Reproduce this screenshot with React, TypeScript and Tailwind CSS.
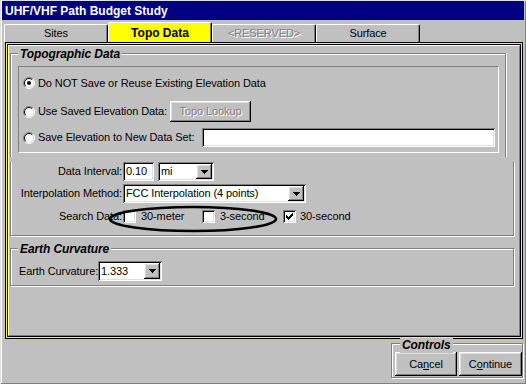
import React from "react";

// win95 bevels
const raised =
  "shadow-[inset_-1px_-1px_0_#000,inset_1px_1px_0_#fff,inset_-2px_-2px_0_#808080,inset_2px_2px_0_#dfdfdf]";
const sunken =
  "shadow-[inset_1px_1px_0_#808080,inset_-1px_-1px_0_#fff,inset_2px_2px_0_#000,inset_-2px_-2px_0_#dfdfdf]";
const greyed = "text-[#808080] [text-shadow:1px_1px_0_#fff]";
const legend = "absolute bg-[#c0c0c0] px-[2px] text-[12px] leading-[15px] font-bold italic whitespace-nowrap";

function Radio({ checked = false }: { checked?: boolean }) {
  return (
    <svg width="12" height="12" viewBox="0 0 12 12" className="shrink-0">
      <circle cx="6" cy="6" r="5" fill="#fff" />
      <path d="M9.9 2.1A5.5 5.5 0 0 0 2.1 9.9" stroke="#808080" fill="none" />
      <path d="M2.1 9.9A5.5 5.5 0 0 0 9.9 2.1" stroke="#fff" fill="none" />
      <path d="M9.2 2.8A4.5 4.5 0 0 0 2.8 9.2" stroke="#000" fill="none" />
      <path d="M2.8 9.2A4.5 4.5 0 0 0 9.2 2.8" stroke="#dfdfdf" fill="none" />
      {checked && <circle cx="6" cy="6" r="2" fill="#000" />}
    </svg>
  );
}

function Check({ checked = false }: { checked?: boolean }) {
  return (
    <span className={`w-[13px] h-[13px] shrink-0 bg-white ${sunken} flex items-center justify-center`}>
      {checked && (
        <svg width="7" height="7" viewBox="0 0 7 7" shapeRendering="crispEdges">
          <rect x="6" y="0" width="1" height="1" />
          <rect x="5" y="1" width="2" height="1" />
          <rect x="0" y="2" width="1" height="1" />
          <rect x="4" y="2" width="3" height="1" />
          <rect x="0" y="3" width="2" height="1" />
          <rect x="3" y="3" width="3" height="1" />
          <rect x="0" y="4" width="5" height="1" />
          <rect x="1" y="5" width="3" height="1" />
          <rect x="2" y="6" width="1" height="1" />
        </svg>
      )}
    </span>
  );
}

function Combo({ value, className }: { value: string; className: string }) {
  return (
    <div className={`flex bg-white p-[2px] ${sunken} ${className}`}>
      <span className="flex-1 pl-[1px] flex items-center truncate">{value}</span>
      <span className={`w-[16px] bg-[#c0c0c0] ${raised} flex items-center justify-center`}>
        <svg width="7" height="4" viewBox="0 0 7 4" shapeRendering="crispEdges">
          <rect x="0" y="0" width="7" height="1" />
          <rect x="1" y="1" width="5" height="1" />
          <rect x="2" y="2" width="3" height="1" />
          <rect x="3" y="3" width="1" height="1" />
        </svg>
      </span>
    </div>
  );
}

const tabs = [
  { label: "Sites" },
  { label: "Topo Data", active: true },
  { label: "<RESERVED>", disabled: true },
  { label: "Surface" },
];

export default function App() {
  return (
    <div className="relative w-[526px] h-[384px] overflow-hidden bg-[#c0c0c0] pt-[1px] px-[2px] font-['Liberation_Sans',Arial,sans-serif] text-[11px] text-black tracking-[-0.1px] whitespace-nowrap shadow-[inset_1px_1px_0_#dfdfdf,inset_-1px_-1px_0_#808080,inset_2px_2px_0_#fff]">
      {/* title bar */}
      <div className="h-[19px] bg-[#000080] text-white font-bold text-[12px] tracking-normal flex items-center pl-[3px]">
        UHF/VHF Path Budget Study
      </div>

      {/* tabs */}
      <div className="mt-[2px] h-[20px] pl-[2px] flex items-end">
        {tabs.map((t) => (
          <div
            key={t.label}
            className={`w-[104px] flex items-center justify-center rounded-t-[2px] border-t border-l border-white border-r border-r-black shadow-[inset_-1px_0_0_#808080] ${
              t.active ? "h-[20px] bg-[#ffff00] font-bold text-[12px] tracking-normal" : "h-[18px]"
            } ${t.disabled ? greyed : ""}`}
          >
            {t.label}
          </div>
        ))}
      </div>

      {/* tab page */}
      <div className="ml-[3px] w-[518px] h-[297px] border border-black">
        <div className="h-full border border-[#ffff00]">
          <div className="h-full border border-black">
            <div className="h-full border-t border-l border-white border-r border-b border-r-[#808080] border-b-[#808080]">
              <div className="ml-[1px] mt-[7px] w-[505px]">
                {/* Topographic Data */}
                <div className="relative w-[496px] h-[104px] border-t border-l border-r border-[#808080] shadow-[inset_1px_1px_0_#fff,1px_0_0_#fff]">
                  <span className={`${legend} left-[7px] top-[-7px]`}>Topographic Data</span>
                  <div className="ml-[7px] mt-[12px] w-[481px] h-[87px] border-t border-l border-[#808080] border-r border-b border-r-white border-b-white pl-[4px] pt-[9px]">
                    <div className="h-[14px] flex items-center">
                      <Radio checked />
                      <span className="ml-[3px]">Do NOT Save or Reuse Existing Elevation Data</span>
                    </div>
                    <div className="mt-[11px] h-[21px] flex items-center">
                      <div className="w-[147px] flex items-center">
                        <Radio />
                        <span className="ml-[3px]">Use Saved Elevation Data:</span>
                      </div>
                      <div className={`w-[81px] h-[21px] ${raised} flex items-center justify-center ${greyed}`}>
                        Topo Lookup
                      </div>
                    </div>
                    <div className="mt-[6px] h-[19px] flex items-center">
                      <div className="w-[179px] flex items-center">
                        <Radio />
                        <span className="ml-[3px]">Save Elevation to New Data Set:</span>
                      </div>
                      <div className={`w-[293px] h-[19px] bg-white ${sunken}`} />
                    </div>
                  </div>
                </div>

                {/* data interval / interpolation / search data */}
                <div className="w-[504px] h-[74px] border-l border-r border-b border-[#808080] shadow-[inset_1px_0_0_#fff,1px_1px_0_#fff]">
                  <div className="mt-[5px] h-[19px] flex items-center">
                    <span className="w-[111px] text-right">Data Interval:</span>
                    <div className={`ml-[1px] w-[31px] h-[19px] bg-white ${sunken} flex items-center pl-[3px]`}>0.10</div>
                    <Combo value="mi" className="ml-[4px] w-[56px] h-[19px]" />
                  </div>
                  <div className="mt-[3px] h-[19px] flex items-center">
                    <span className="w-[111px] text-right">Interpolation Method:</span>
                    <Combo value="FCC Interpolation (4 points)" className="ml-[1px] w-[183px] h-[19px]" />
                  </div>
                  <div className="mt-[7px] h-[13px] flex items-center">
                    <span className="w-[111px] text-right">Search Data:</span>
                    <div className="ml-[1px] w-[79px] flex items-center">
                      <Check />
                      <span className="ml-[5px]">30-meter</span>
                    </div>
                    <div className="w-[81px] flex items-center">
                      <Check />
                      <span className="ml-[5px]">3-second</span>
                    </div>
                    <div className="flex items-center">
                      <Check checked />
                      <span className="ml-[4px]">30-second</span>
                    </div>
                  </div>
                </div>

                {/* Earth Curvature */}
                <div className="relative mt-[12px] w-[504px] h-[38px] border border-[#808080] shadow-[inset_1px_1px_0_#fff,1px_1px_0_#fff] pl-[8px] pt-[12px]">
                  <span className={`${legend} left-[7px] top-[-7px]`}>Earth Curvature</span>
                  <div className="flex items-center">
                    <span className="w-[79px]">Earth Curvature:</span>
                    <Combo value="1.333" className="w-[64px] h-[20px]" />
                  </div>
                </div>
              </div>
            </div>
          </div>
        </div>
      </div>

      {/* Controls */}
      <div className="mt-[4px] flex justify-end pr-[1px]">
        <div className="relative w-[132px] h-[35px] border border-[#808080] shadow-[inset_1px_1px_0_#fff,1px_1px_0_#fff] pl-[3px] pt-[8px] flex items-start">
          <span className={`${legend} left-[8px] top-[-6px]`}>Controls</span>
          <div className={`w-[62px] h-[24px] ${raised} flex items-center justify-center`}>
            Ca<span className="underline underline-offset-1">n</span>cel
          </div>
          <div className={`ml-[2px] w-[63px] h-[24px] ${raised} flex items-center justify-center`}>
            C<span className="underline underline-offset-1">o</span>ntinue
          </div>
        </div>
      </div>

      {/* hand-drawn highlight around the search data options */}
      <svg className="absolute left-[108px] top-[204px] pointer-events-none" width="170" height="30" viewBox="0 0 170 30">
        <ellipse cx="85" cy="15" rx="83" ry="12" fill="none" stroke="#000" strokeWidth="2.5" />
      </svg>
    </div>
  );
}
